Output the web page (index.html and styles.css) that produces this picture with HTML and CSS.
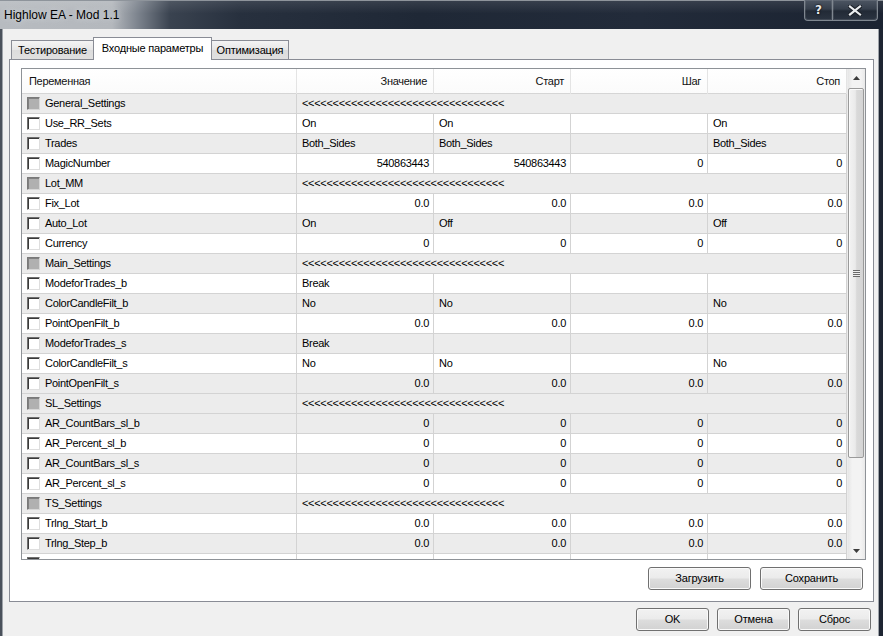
FILE: index.html
```html
<!DOCTYPE html>
<html lang="ru">
<head>
<meta charset="utf-8">
<title>Highlow EA - Mod 1.1</title>
<link rel="stylesheet" href="styles.css">
</head>
<body>
<div class="window">
  <div class="titlebar">
    <span class="title">Highlow EA - Mod 1.1</span>
    <div class="captions">
      <div class="cbtn help"><span class="qmark">?</span></div>
      <div class="cbtn close">
        <svg width="14" height="11" viewBox="0 0 14 11"><path d="M2 1.5 L12 9.5 M12 1.5 L2 9.5" stroke="#1a1f27" stroke-width="4.2" stroke-linecap="square"/><path d="M2 1.5 L12 9.5 M12 1.5 L2 9.5" stroke="#e9ecef" stroke-width="2.2" stroke-linecap="square"/></svg>
      </div>
    </div>
  </div>
  <div class="framebody">
    <div class="client">
      <div class="tabs">
        <div class="tab t1">Тестирование</div>
        <div class="tab active t2">Входные параметры</div>
        <div class="tab t3">Оптимизация</div>
      </div>
      <div class="panel">
        <div class="grid">
          <div class="gmain">
            <div class="hrow">
              <div class="hcell first">Переменная</div>
              <div class="hcell">Значение</div>
              <div class="hcell">Старт</div>
              <div class="hcell">Шаг</div>
              <div class="hcell">Стоп</div>
            </div>

            <div class="row alt"><div class="cell name"><span class="cb dis"></span>General_Settings</div><div class="cell span">&lt;&lt;&lt;&lt;&lt;&lt;&lt;&lt;&lt;&lt;&lt;&lt;&lt;&lt;&lt;&lt;&lt;&lt;&lt;&lt;&lt;&lt;&lt;&lt;&lt;&lt;&lt;&lt;&lt;&lt;&lt;&lt;&lt;</div></div>
            <div class="row"><div class="cell name"><span class="cb"></span>Use_RR_Sets</div><div class="cell">On</div><div class="cell">On</div><div class="cell"></div><div class="cell">On</div></div>
            <div class="row alt"><div class="cell name"><span class="cb"></span>Trades</div><div class="cell">Both_Sides</div><div class="cell">Both_Sides</div><div class="cell"></div><div class="cell">Both_Sides</div></div>
            <div class="row"><div class="cell name"><span class="cb"></span>MagicNumber</div><div class="cell num">540863443</div><div class="cell num">540863443</div><div class="cell num">0</div><div class="cell num">0</div></div>
            <div class="row alt"><div class="cell name"><span class="cb dis"></span>Lot_MM</div><div class="cell span">&lt;&lt;&lt;&lt;&lt;&lt;&lt;&lt;&lt;&lt;&lt;&lt;&lt;&lt;&lt;&lt;&lt;&lt;&lt;&lt;&lt;&lt;&lt;&lt;&lt;&lt;&lt;&lt;&lt;&lt;&lt;&lt;&lt;</div></div>
            <div class="row"><div class="cell name"><span class="cb"></span>Fix_Lot</div><div class="cell num">0.0</div><div class="cell num">0.0</div><div class="cell num">0.0</div><div class="cell num">0.0</div></div>
            <div class="row alt"><div class="cell name"><span class="cb"></span>Auto_Lot</div><div class="cell">On</div><div class="cell">Off</div><div class="cell"></div><div class="cell">Off</div></div>
            <div class="row"><div class="cell name"><span class="cb"></span>Currency</div><div class="cell num">0</div><div class="cell num">0</div><div class="cell num">0</div><div class="cell num">0</div></div>
            <div class="row alt"><div class="cell name"><span class="cb dis"></span>Main_Settings</div><div class="cell span">&lt;&lt;&lt;&lt;&lt;&lt;&lt;&lt;&lt;&lt;&lt;&lt;&lt;&lt;&lt;&lt;&lt;&lt;&lt;&lt;&lt;&lt;&lt;&lt;&lt;&lt;&lt;&lt;&lt;&lt;&lt;&lt;&lt;</div></div>
            <div class="row"><div class="cell name"><span class="cb"></span>ModeforTrades_b</div><div class="cell">Break</div><div class="cell"></div><div class="cell"></div><div class="cell"></div></div>
            <div class="row alt"><div class="cell name"><span class="cb"></span>ColorCandleFilt_b</div><div class="cell">No</div><div class="cell">No</div><div class="cell"></div><div class="cell">No</div></div>
            <div class="row"><div class="cell name"><span class="cb"></span>PointOpenFilt_b</div><div class="cell num">0.0</div><div class="cell num">0.0</div><div class="cell num">0.0</div><div class="cell num">0.0</div></div>
            <div class="row alt"><div class="cell name"><span class="cb"></span>ModeforTrades_s</div><div class="cell">Break</div><div class="cell"></div><div class="cell"></div><div class="cell"></div></div>
            <div class="row"><div class="cell name"><span class="cb"></span>ColorCandleFilt_s</div><div class="cell">No</div><div class="cell">No</div><div class="cell"></div><div class="cell">No</div></div>
            <div class="row alt"><div class="cell name"><span class="cb"></span>PointOpenFilt_s</div><div class="cell num">0.0</div><div class="cell num">0.0</div><div class="cell num">0.0</div><div class="cell num">0.0</div></div>
            <div class="row alt"><div class="cell name"><span class="cb dis"></span>SL_Settings</div><div class="cell span">&lt;&lt;&lt;&lt;&lt;&lt;&lt;&lt;&lt;&lt;&lt;&lt;&lt;&lt;&lt;&lt;&lt;&lt;&lt;&lt;&lt;&lt;&lt;&lt;&lt;&lt;&lt;&lt;&lt;&lt;&lt;&lt;&lt;</div></div>
            <div class="row alt"><div class="cell name"><span class="cb"></span>AR_CountBars_sl_b</div><div class="cell num">0</div><div class="cell num">0</div><div class="cell num">0</div><div class="cell num">0</div></div>
            <div class="row"><div class="cell name"><span class="cb"></span>AR_Percent_sl_b</div><div class="cell num">0</div><div class="cell num">0</div><div class="cell num">0</div><div class="cell num">0</div></div>
            <div class="row alt"><div class="cell name"><span class="cb"></span>AR_CountBars_sl_s</div><div class="cell num">0</div><div class="cell num">0</div><div class="cell num">0</div><div class="cell num">0</div></div>
            <div class="row"><div class="cell name"><span class="cb"></span>AR_Percent_sl_s</div><div class="cell num">0</div><div class="cell num">0</div><div class="cell num">0</div><div class="cell num">0</div></div>
            <div class="row alt"><div class="cell name"><span class="cb dis"></span>TS_Settings</div><div class="cell span">&lt;&lt;&lt;&lt;&lt;&lt;&lt;&lt;&lt;&lt;&lt;&lt;&lt;&lt;&lt;&lt;&lt;&lt;&lt;&lt;&lt;&lt;&lt;&lt;&lt;&lt;&lt;&lt;&lt;&lt;&lt;&lt;&lt;</div></div>
            <div class="row"><div class="cell name"><span class="cb"></span>Trlng_Start_b</div><div class="cell num">0.0</div><div class="cell num">0.0</div><div class="cell num">0.0</div><div class="cell num">0.0</div></div>
            <div class="row alt"><div class="cell name"><span class="cb"></span>Trlng_Step_b</div><div class="cell num">0.0</div><div class="cell num">0.0</div><div class="cell num">0.0</div><div class="cell num">0.0</div></div>
            <div class="row"><div class="cell name"><span class="cb"></span></div><div class="cell"></div><div class="cell"></div><div class="cell"></div><div class="cell"></div></div>
          </div>
          <div class="vscroll">
            <div class="sbtn"><svg width="7" height="4" viewBox="0 0 7 4"><path d="M0 4 L3.5 0 L7 4 Z" fill="#3c3c3c"/></svg></div>
            <div class="thumb"><span class="grip"></span></div>
            <div class="track"></div>
            <div class="sbtn"><svg width="7" height="4" viewBox="0 0 7 4"><path d="M0 0 L7 0 L3.5 4 Z" fill="#3c3c3c"/></svg></div>
          </div>
        </div>
        <div class="pactions">
          <div class="btn wide">Загрузить</div>
          <div class="btn wide">Сохранить</div>
        </div>
      </div>
      <div class="dactions">
        <div class="btn">OK</div>
        <div class="btn">Отмена</div>
        <div class="btn">Сброс</div>
      </div>
    </div>
  </div>
</div>
</body>
</html>
```

FILE: styles.css
```css
html, body {
  margin: 0;
  padding: 0;
}
body {
  width: 883px;
  height: 636px;
  overflow: hidden;
  background: #1e2532;
  font-family: "Liberation Sans", Arial, sans-serif;
  font-size: 11px;
  color: #000;
}
.window {
  width: 883px;
  height: 636px;
  display: flex;
  flex-direction: column;
}

/* title bar */
.titlebar {
  height: 29px;
  flex: none;
  display: flex;
  justify-content: space-between;
  align-items: flex-start;
  box-sizing: border-box;
  border-top: 1px solid #8e949b;
  background:
    linear-gradient(to bottom, rgba(255,255,255,0.10), rgba(255,255,255,0) 45%),
    linear-gradient(to right, #b7bbc0 0px, #b4b8bd 112px, #7c838d 138px, #3a4350 170px, #27303e 240px, #1f2836 420px, #222b3a 640px, #1b2331 100%);
}
.title {
  margin: 7px 0 0 4px;
  font-size: 12px;
  line-height: 14px;
  color: #000;
  text-shadow: 0 0 6px rgba(230,233,236,0.9);
}
.captions {
  display: flex;
  margin-right: 5px;
  margin-top: -1px;
}
.cbtn {
  height: 21px;
  box-sizing: border-box;
  display: flex;
  align-items: center;
  justify-content: center;
  border: 1px solid #7f8790;
  border-top: none;
  background: linear-gradient(to bottom, #4d5663 0%, #363f4c 45%, #222a36 55%, #2b3441 100%);
  box-shadow: inset 0 0 0 1px rgba(255,255,255,0.10);
}
.help {
  width: 29px;
  border-radius: 0 0 0 4px;
}
.close {
  width: 45px;
  border-left: none;
  border-radius: 0 0 4px 0;
}
.qmark {
  font-family: "DejaVu Sans", sans-serif;
  font-weight: bold;
  font-size: 12px;
  color: #e6e9ec;
  text-shadow: 0 0 2px #000, 0 0 1px #000;
  line-height: 12px;
}

/* frame + client */
.framebody {
  flex: 1;
  display: flex;
  padding: 0 4px 0 2px;
  background: linear-gradient(to right, #4a515b 0, #4a515b 2px, #1e2532 2px);
  min-height: 0;
}
.client {
  flex: 1;
  display: flex;
  flex-direction: column;
  background: #f0f0f0;
  border-left: 1px solid #9ea3a9;
  border-right: 1px solid #9ea3a9;
  padding: 8px 4px 0 6px;
}

/* tabs */
.tabs {
  display: flex;
  align-items: flex-end;
  height: 23px;
  padding-left: 2px;
  margin-bottom: -1px;
  position: relative;
  z-index: 1;
}
.tab {
  box-sizing: border-box;
  height: 19px;
  margin-bottom: 1px;
  border: 1px solid #898c95;
  border-bottom: none;
  background: linear-gradient(to bottom, #f4f4f4, #e6e6e6 50%, #dcdcdc 51%, #e0e0e0);
  text-align: center;
  line-height: 18px;
  letter-spacing: -0.2px;
  white-space: nowrap;
  color: #000;
}
.t1 { width: 82px; border-right: none; }
.t2 { width: 119px; }
.t3 { width: 77px; border-left: none; }
.tab.active {
  height: 23px;
  margin-bottom: 0;
  background: #fff;
  line-height: 21px;
}

/* panel */
.panel {
  height: 543px;
  box-sizing: border-box;
  border: 1px solid #898c95;
  background: #fff;
  padding: 8px 7px 11px 11px;
  display: flex;
  flex-direction: column;
}
.grid {
  height: 492px;
  flex: none;
  box-sizing: border-box;
  border: 1px solid #8e9297;
  display: flex;
  overflow: hidden;
}
.gmain {
  width: 825px;
  flex: none;
  overflow: hidden;
}
.hrow, .row {
  display: grid;
  grid-template-columns: 275px 137px 137px 137px 139px;
}
.hrow {
  height: 25px;
  box-sizing: border-box;
  border-bottom: 1px solid #d5d5d5;
  background: linear-gradient(to bottom, #ffffff, #fbfbfb);
}
.hcell {
  border-right: 1px solid #e4e4e4;
  padding: 0 6px;
  line-height: 25px;
  text-align: right;
  letter-spacing: -0.3px;
  white-space: nowrap;
  color: #111;
}
.hcell.first {
  text-align: left;
  padding-left: 7px;
}
.row {
  height: 20px;
  box-sizing: border-box;
  border-bottom: 1px solid #d3d3d3;
  background: #fff;
}
.row.alt {
  background: #ececec;
}
.cell {
  border-right: 1px solid #d3d3d3;
  padding: 0 4px 0 5px;
  line-height: 19px;
  white-space: nowrap;
  overflow: hidden;
  letter-spacing: -0.3px;
}
.cell.num {
  text-align: right;
}
.cell.name {
  display: flex;
  align-items: center;
  gap: 5px;
}
.cell.span {
  grid-column: 2 / 6;
}
.cb {
  flex: none;
  width: 13px;
  height: 13px;
  box-sizing: border-box;
  border: 1px solid;
  border-color: #6f6f6f #dedede #dedede #6f6f6f;
  box-shadow: inset 1px 1px 0 #3a3a3a;
  background: #fff;
}
.cb.dis {
  background: #b0b0b0;
  box-shadow: inset 1px 1px 0 #808080;
  border-color: #7a7a7a #d6d6d6 #d6d6d6 #7a7a7a;
}

/* scrollbar */
.vscroll {
  flex: 1;
  display: flex;
  flex-direction: column;
  background: linear-gradient(to right, #e6e6e6, #f3f3f3 25%, #f3f3f3 75%, #e9e9e9);
  border-left: 1px solid #ececec;
}
.sbtn {
  height: 17px;
  flex: none;
  display: flex;
  align-items: center;
  justify-content: center;
}
.thumb {
  height: 370px;
  flex: none;
  margin: 2px 1px 0 0;
  box-sizing: border-box;
  border: 1px solid #9a9a9a;
  border-radius: 2px;
  background: linear-gradient(to right, #f3f3f3 0%, #eaeaea 45%, #d9d9d9 55%, #d4d4d4 100%);
  box-shadow: inset 1px 1px 0 #fbfbfb;
  display: flex;
  align-items: center;
  justify-content: center;
}
.grip {
  width: 7px;
  height: 7px;
  background: repeating-linear-gradient(to bottom, #6a6a6a 0, #6a6a6a 1px, #eeeeee 1px, #eeeeee 2px);
}
.track {
  flex: 1;
}

/* buttons */
.pactions {
  display: flex;
  justify-content: flex-end;
  gap: 9px;
  margin-top: 7px;
  padding-right: 3px;
}
.dactions {
  display: flex;
  justify-content: flex-end;
  gap: 8px;
  margin-top: 6px;
  padding-right: 3px;
}
.btn {
  width: 73px;
  height: 23px;
  box-sizing: border-box;
  border: 1px solid #707070;
  border-radius: 3px;
  background: linear-gradient(to bottom, #f2f2f2 0%, #ebebeb 48%, #dddddd 52%, #d2d2d2 100%);
  box-shadow: inset 0 0 0 1px #fafafa;
  text-align: center;
  line-height: 21px;
  letter-spacing: -0.2px;
  color: #000;
}
.btn.wide {
  width: 103px;
}
```
